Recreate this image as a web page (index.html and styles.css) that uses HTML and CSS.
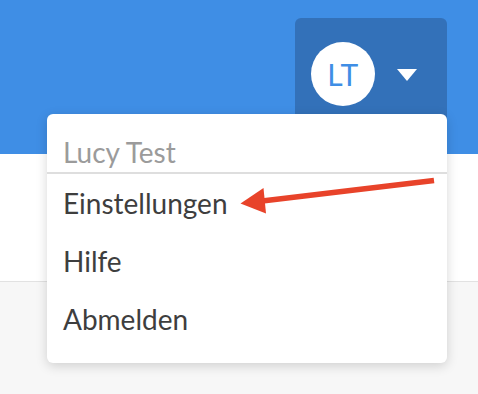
FILE: index.html
```html
<!DOCTYPE html>
<html lang="de">
<head>
<meta charset="utf-8">
<title>Menü</title>
<link rel="stylesheet" href="styles.css">
</head>
<body>
<div class="page">
  <header class="topbar">
    <div class="userbtn">
      <div class="avatar">LT</div>
      <svg class="caret" width="20" height="12" viewBox="0 0 20 12"><polygon points="0,0 20,0 10,12" fill="#ffffff"/></svg>
    </div>
  </header>
  <section class="band"></section>
  <section class="rest"></section>

  <div class="menu">
    <div class="menu-head">Lucy Test</div>
    <div class="menu-item">Einstellungen</div>
    <div class="menu-item">Hilfe</div>
    <div class="menu-item">Abmelden</div>
  </div>

  <svg class="annot" width="478" height="394" viewBox="0 0 478 394">
    <line x1="434" y1="180.5" x2="258" y2="201.5" stroke="#e8432a" stroke-width="5.5"/>
    <polygon points="240.5,203.5 263.5,188 266,213.5" fill="#e8432a"/>
  </svg>
</div>
</body>
</html>
```

FILE: styles.css
```css
html, body {
  margin: 0;
  padding: 0;
}
body {
  font-family: Lato, "Noto Sans", sans-serif;
  background: #f7f7f7;
  width: 478px;
  height: 394px;
  overflow: hidden;
}
.page {
  position: relative;
  width: 478px;
  height: 394px;
}
.topbar {
  height: 154px;
  background: #3f8ee5;
  display: flex;
  justify-content: flex-end;
  align-items: flex-start;
  padding: 18px 31px 0 0;
  box-sizing: border-box;
}
.userbtn {
  width: 152px;
  height: 112px;
  background: #3371b9;
  border-radius: 6px;
  display: flex;
  align-items: center;
  padding-left: 16px;
  box-sizing: border-box;
}
.avatar {
  width: 64px;
  height: 64px;
  border-radius: 50%;
  background: #ffffff;
  color: #3f8ee5;
  font-size: 30px;
  line-height: 64px;
  text-align: center;
  letter-spacing: 0.5px;
}
.caret {
  margin-left: 22px;
  margin-top: 2px;
}
.band {
  height: 128px;
  background: #ffffff;
  border-bottom: 1px solid #e2e2e2;
  box-sizing: border-box;
}
.rest {
  height: 112px;
}
.menu {
  position: absolute;
  left: 47px;
  top: 114px;
  width: 400px;
  height: 249px;
  background: #ffffff;
  border-radius: 6px;
  box-shadow: 0 3px 12px rgba(0, 0, 0, 0.16);
  padding: 18px 0 0 0;
  box-sizing: border-box;
}
.menu-head {
  height: 40px;
  line-height: 40px;
  font-size: 28px;
  color: #9b9b9b;
  padding-left: 16px;
  border-bottom: 2px solid #dedede;
}
.menu-item {
  height: 58px;
  line-height: 58px;
  font-size: 28px;
  color: #3e3e3e;
  padding-left: 16px;
}
.annot {
  position: absolute;
  left: 0;
  top: 0;
  pointer-events: none;
}
```
